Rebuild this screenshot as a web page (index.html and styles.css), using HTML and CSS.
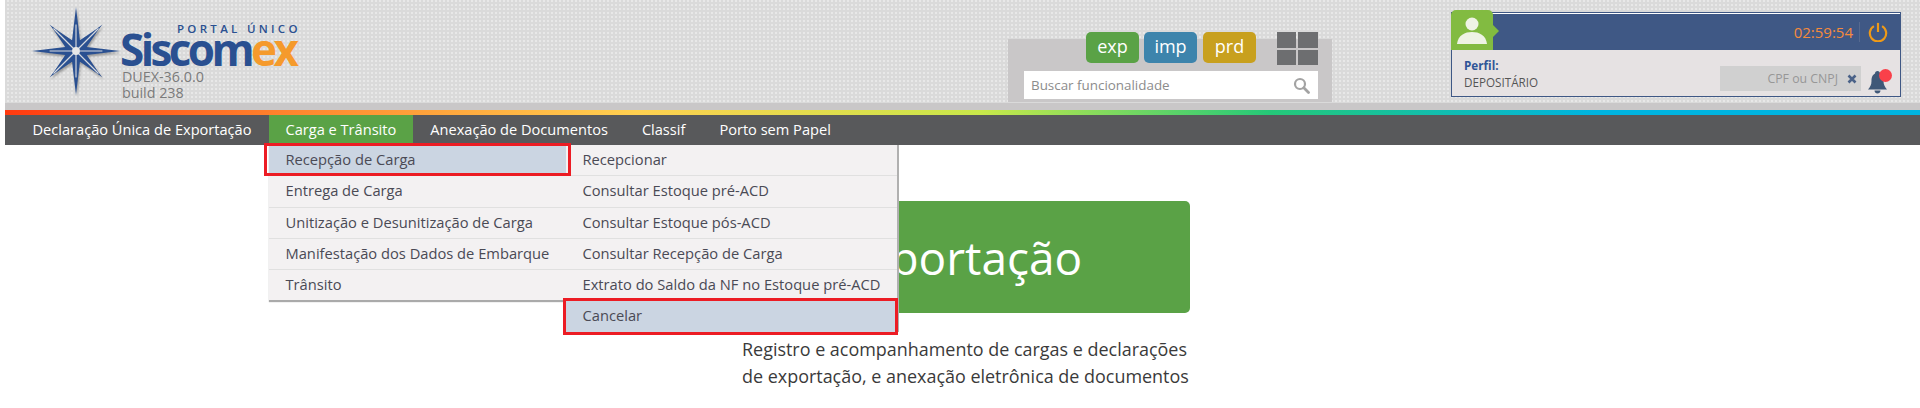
FILE: index.html
```html
<!DOCTYPE html>
<html lang="pt-BR">
<head>
  <meta charset="UTF-8" />
  <title>Portal Único Siscomex</title>
  <link rel="stylesheet" href="styles.css">
</head>
<body>
  <header class="topo">
    <div class="logo">
      <svg class="logo-star" width="88" height="88" viewBox="0 0 90 90" aria-hidden="true">
        <path fill="#2a5091" d="M45 0 L49 34 L70 20 L56 41 L90 45 L56 49 L70 70 L49 56 L45 90 L41 56 L20 70 L34 49 L0 45 L34 41 L20 20 L41 34 Z"/>
        <path fill="#2a5091" d="M18 18 L44 38 L38 44 Z M72 18 L52 44 L46 38 Z M18 72 L38 46 L44 52 Z M72 72 L46 52 L52 46 Z"/>
        <path stroke="#d5d8de" stroke-width="1.2" fill="none" d="M22 22 L68 68 M68 22 L22 68 M18 45 L72 45 M45 18 L45 72"/>
        <circle cx="45" cy="45" r="4" fill="#e8e8e8"/>
      </svg>
      <div class="logo-text">
        <div class="logo-portal">PORTAL ÚNICO</div>
        <div class="logo-nome">Siscom<span class="logo-ex">ex</span></div>
        <div class="logo-versao">DUEX-36.0.0<br>build 238</div>
      </div>
    </div>

    <div class="busca">
      <div class="busca-topo">
        <a class="modulo modulo-exp">exp</a>
        <a class="modulo modulo-imp">imp</a>
        <a class="modulo modulo-prd">prd</a>
        <div class="grade"><i></i><i></i><i></i><i></i></div>
      </div>
      <div class="busca-campo">
        <span>Buscar funcionalidade</span>
        <svg width="17" height="17" viewBox="0 0 17 17" aria-hidden="true">
          <circle cx="7" cy="7" r="5" fill="none" stroke="#a3a3a3" stroke-width="2.2"/>
          <path d="M10.8 10.8 L15.5 15.5" stroke="#a3a3a3" stroke-width="2.8" stroke-linecap="round"/>
        </svg>
      </div>
    </div>

    <div class="perfil">
      <div class="perfil-barra">
        <div class="perfil-avatar">
          <svg width="30" height="27" viewBox="0 0 30 27" aria-hidden="true">
            <circle cx="15" cy="7" r="6.5" fill="#eef3e4"/>
            <path fill="#eef3e4" d="M0 27 C1 18 8 15 15 15 C22 15 29 18 30 27 Z"/>
          </svg>
        </div>
        <span class="perfil-hora">02:59:54</span>
        <span class="perfil-sep"></span>
        <svg class="perfil-power" width="20" height="20" viewBox="0 0 22 22" aria-hidden="true">
          <path d="M6.5 4.5 A9 9 0 1 0 15.5 4.5" fill="none" stroke="#ef9a17" stroke-width="2.4"/>
          <path d="M11 1 V11" stroke="#ef9a17" stroke-width="2.4"/>
        </svg>
      </div>
      <div class="perfil-corpo">
        <div class="perfil-info">
          <strong>Perfil:</strong>
          <span>DEPOSITÁRIO</span>
        </div>
        <div class="perfil-cpf">
          <span>CPF ou CNPJ</span>
          <svg width="10" height="10" viewBox="0 0 10 10" aria-hidden="true">
            <path d="M1.5 1.5 L8.5 8.5 M8.5 1.5 L1.5 8.5" stroke="#4a6288" stroke-width="2.6"/>
          </svg>
        </div>
        <div class="sino">
          <svg width="19" height="24" viewBox="0 0 19 24" aria-hidden="true">
            <path fill="#3f5878" d="M9.5 1 C11 1 12 2 12 3.5 C15 5 15.5 8 15.5 11 C15.5 15 17 17 19 19.5 L0 19.5 C2 17 3.5 15 3.5 11 C3.5 8 4 5 7 3.5 C7 2 8 1 9.5 1 Z M6.5 20.5 H12.5 C12.5 22.5 11 23.5 9.5 23.5 C8 23.5 6.5 22.5 6.5 20.5 Z"/>
          </svg>
          <span class="sino-ponto"></span>
        </div>
      </div>
    </div>
  </header>

  <div class="faixa"></div>

  <nav class="menu">
    <a class="menu-item">Declaração Única de Exportação</a>
    <div class="menu-grupo">
      <a class="menu-item ativo">Carga e Trânsito</a>
      <div class="submenu">
        <ul class="sub-col sub-col-1">
          <li class="marcado">Recepção de Carga</li>
          <li>Entrega de Carga</li>
          <li>Unitização e Desunitização de Carga</li>
          <li>Manifestação dos Dados de Embarque</li>
          <li>Trânsito</li>
        </ul>
        <ul class="sub-col sub-col-2">
          <li>Recepcionar</li>
          <li>Consultar Estoque pré-ACD</li>
          <li>Consultar Estoque pós-ACD</li>
          <li>Consultar Recepção de Carga</li>
          <li>Extrato do Saldo da NF no Estoque pré-ACD</li>
          <li class="marcado">Cancelar</li>
        </ul>
      </div>
    </div>
    <a class="menu-item">Anexação de Documentos</a>
    <a class="menu-item">Classif</a>
    <a class="menu-item">Porto sem Papel</a>
  </nav>

  <main class="conteudo">
    <section class="cartao">
      <h1 class="cartao-titulo">Exportação</h1>
      <p class="cartao-texto">Registro e acompanhamento de cargas e declarações de exportação, e anexação eletrônica de documentos</p>
    </section>
  </main>
</body>
</html>
```

FILE: styles.css
```css
html, body {
  margin: 0;
  padding: 0;
  height: 408px;
  overflow: hidden;
  background: #fff;
}
body {
  padding-left: 5px;
  font-family: "Open Sans", "Liberation Sans", sans-serif;
  color: #333;
}

/* topo */
.topo {
  height: 103px;
  padding-bottom: 7px;
  display: flex;
  align-items: flex-start;
  background: #c9c7c8;
}
.topo::before {
  content: "";
  position: absolute;
  left: 5px;
  right: 0;
  top: 0;
  height: 103px;
  background: conic-gradient(#e8e8e8 25%, #dadada 0) 0 0 / 4px 4px;
}
.logo, .busca, .perfil { position: relative; }
.logo {
  display: flex;
  margin: 7px 0 0 27px;
  width: 976px;
}
.logo-star {
  flex: none;
  filter: drop-shadow(1px 2px 1px rgba(0,0,0,0.3));
}
.logo-text {
  margin-left: 2px;
  padding-top: 16px;
}
.logo-portal {
  margin-left: 55px;
  font-size: 11.5px;
  line-height: 12px;
  letter-spacing: 3.3px;
  font-weight: 600;
  color: #2a5091;
  white-space: nowrap;
}
.logo-nome {
  margin: -4px 0 0 -2px;
  font-size: 44px;
  line-height: 36px;
  font-weight: 700;
  letter-spacing: -3.6px;
  color: #2a5091;
}
.logo-ex { color: #f59a2c; }
.logo-versao {
  margin-top: 2px;
  font-size: 14.3px;
  line-height: 15.5px;
  color: #7b7b7b;
}

/* busca */
.busca {
  width: 324px;
  height: 63px;
  margin-top: 39px;
  background: #c9c7c8;
  padding: 0 14px 0 16px;
  box-sizing: border-box;
}
.busca-topo {
  display: flex;
  align-items: flex-start;
  justify-content: flex-end;
  margin-top: -7px;
  height: 39px;
}
.modulo {
  width: 53px;
  height: 31px;
  margin-right: 6px;
  border-radius: 5px;
  color: #fff;
  font-size: 18px;
  line-height: 29px;
  text-align: center;
}
.modulo-exp { background: #5aa246; margin-right: 5px; }
.modulo-imp { background: #3d84ac; }
.modulo-prd { background: #c8a01e; margin-right: 21px; }
.grade {
  display: grid;
  grid-template-columns: 19px 20px;
  grid-template-rows: 16px 15px;
  gap: 2px;
}
.grade i { background: #6d6e70; }
.busca-campo {
  height: 28px;
  background: #fff;
  display: flex;
  align-items: center;
  justify-content: space-between;
  padding: 0 8px 0 7px;
  font-size: 13.4px;
  color: #8c8c8c;
}

/* perfil */
.perfil {
  width: 450px;
  height: 85px;
  margin: 12px 0 0 119px;
  box-sizing: border-box;
  border: 1px solid #3f5885;
  background: #e6e2e3;
}
.perfil-barra {
  height: 36px;
  border-top: 1px solid #fff;
  background: #3f5885;
  display: flex;
  align-items: center;
  justify-content: flex-end;
  position: relative;
}
.perfil-avatar {
  position: absolute;
  left: -1px;
  top: -4px;
  width: 42px;
  height: 40px;
  background: #82bb41;
  border-radius: 5px 5px 0 0;
  display: flex;
  align-items: center;
  justify-content: center;
}
.perfil-avatar::after {
  content: "";
  position: absolute;
  left: 42px;
  top: 15px;
  border-left: 6px solid #82bb41;
  border-top: 6px solid transparent;
  border-bottom: 6px solid transparent;
}
.perfil-hora {
  font-size: 15px;
  color: #f58a3c;
}
.perfil-sep {
  width: 1px;
  height: 20px;
  margin: 0 8px 0 6px;
  background: #56698f;
}
.perfil-power { margin-right: 12px; }
.perfil-corpo {
  display: flex;
  height: 46px;
  padding: 0 13px 0 12px;
}
.perfil-info {
  flex: 1;
  display: flex;
  flex-direction: column;
  padding-top: 7px;
  font-size: 11.7px;
  line-height: 17px;
  color: #555;
}
.perfil-info strong { color: #2f5597; }
.perfil-cpf {
  width: 141px;
  height: 25px;
  margin-top: 16px;
  background: #d0d0d0;
  display: flex;
  align-items: center;
  justify-content: flex-end;
  font-size: 12.3px;
  color: #979797;
  padding-right: 4px;
  box-sizing: border-box;
}
.perfil-cpf span { margin-right: 9px; }
.sino {
  position: relative;
  width: 19px;
  margin: 20px 0 0 7px;
}
.sino-ponto {
  position: absolute;
  left: 10.5px;
  top: -1.5px;
  width: 13px;
  height: 13px;
  border-radius: 50%;
  background: #f9404a;
}

/* faixa colorida */
.faixa {
  height: 5px;
  background: linear-gradient(to right, #ff3a10 0%, #ff8a30 16%, #ffd050 33%, #c8e84a 51%, #25c878 66%, #00b4e0 83%, #00b4e0 100%);
}

/* menu */
.menu {
  height: 30px;
  background: #58595b;
  display: flex;
  padding-left: 10.5px;
}
.menu-grupo { position: relative; }
.menu-item {
  display: block;
  height: 30px;
  padding: 0 17px;
  font-size: 14.6px;
  line-height: 29px;
  color: #fff;
  white-space: nowrap;
}
.menu-item.ativo { background: #5aa246; }

.submenu {
  position: absolute;
  left: 0;
  top: 30px;
  display: flex;
  align-items: flex-start;
  z-index: 10;
}
.sub-col {
  list-style: none;
  margin: 0;
  padding: 0;
  background: #f3f1f2;
  font-size: 14.7px;
  color: #4a4a55;
}
.sub-col-1 {
  width: 295px;
  box-shadow: 0 2px 1px #aaa;
}
.sub-col-2 {
  width: 333px;
  box-shadow: 2px 0 0 #b0b0b0;
}
.sub-col li {
  height: 30.25px;
  line-height: 29px;
  padding-left: 17px;
  border-bottom: 1px solid #e0e0e0;
  white-space: nowrap;
  position: relative;
}
.sub-col-2 li { padding-left: 19px; }
.sub-col li:last-child { border-bottom: 0; }
.sub-col li.marcado { background: #cbd5e2; }
.sub-col li.marcado::after {
  content: "";
  position: absolute;
  border: 3px solid #ec1c24;
}
.sub-col-1 li.marcado {
  z-index: 1;
  box-shadow: 2px 0 0 #cbd5e2;
}
.sub-col-1 li.marcado::after {
  left: -5px;
  right: -7px;
  top: -2px;
  bottom: -1px;
}
.sub-col-2 li.marcado::after {
  left: -1px;
  right: -1px;
  top: -3px;
  bottom: -3px;
}

/* conteudo */
.conteudo {
  display: flex;
  padding: 56px 0 0 737px;
}
.cartao { width: 448px; }
.cartao-titulo {
  height: 112px;
  margin: 0;
  padding-right: 9px;
  background: #5aa246;
  border-radius: 5px;
  color: #fff;
  font-size: 46px;
  line-height: 112px;
  font-weight: 400;
  text-align: center;
}
.cartao-texto {
  margin: 23px -12px 0 0;
  font-size: 17.95px;
  line-height: 27px;
  color: #3a3a3a;
}
```
